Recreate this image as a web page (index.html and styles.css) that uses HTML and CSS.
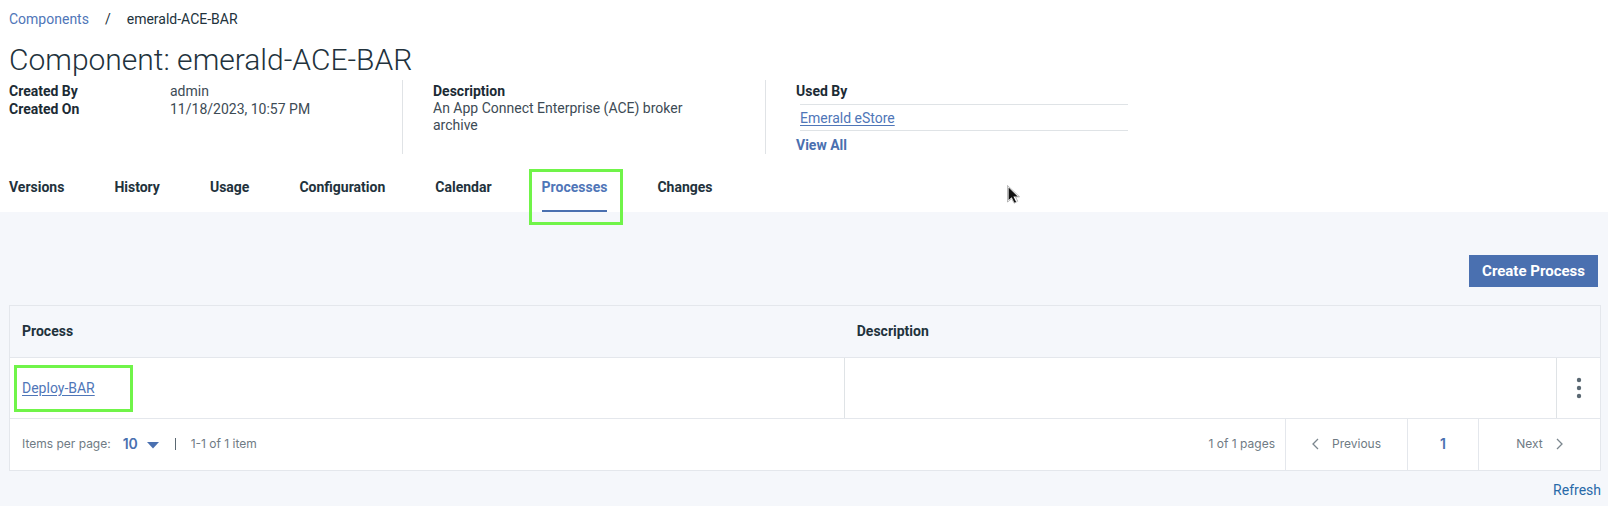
FILE: index.html
```html
<!DOCTYPE html>
<html lang="en">
<head>
<meta charset="utf-8">
<meta name="viewport" content="width=device-width, initial-scale=1">
<title>Component: emerald-ACE-BAR</title>
<link rel="stylesheet" href="styles.css">
</head>
<body>
<header class="header">
  <nav class="breadcrumb" aria-label="Breadcrumb">
    <a class="link" href="#components">Components</a>
    <span class="slash">/</span>
    <span>emerald-ACE-BAR</span>
  </nav>
  <h1 class="title">Component: emerald-ACE-BAR</h1>
  <div class="meta">
    <dl class="created">
      <dt>Created By</dt><dd>admin</dd>
      <dt>Created On</dt><dd>11/18/2023, 10:57 PM</dd>
    </dl>
    <section class="meta-col">
      <h2 class="label">Description</h2>
      <p class="description">An App Connect Enterprise (ACE) broker archive</p>
    </section>
    <section class="meta-col">
      <h2 class="label">Used By</h2>
      <ul class="used-list">
        <li><a class="link underlined" href="#estore">Emerald eStore</a></li>
      </ul>
      <a class="link view-all" href="#all">View All</a>
    </section>
  </div>
  <nav class="tabs" aria-label="Component sections">
    <a class="tab" href="#versions">Versions</a>
    <a class="tab" href="#history">History</a>
    <a class="tab" href="#usage">Usage</a>
    <a class="tab" href="#configuration">Configuration</a>
    <a class="tab" href="#calendar">Calendar</a>
    <a class="tab tab-active" href="#processes" aria-current="page">Processes<span class="mark mark-tab"></span></a>
    <a class="tab" href="#changes">Changes</a>
  </nav>
</header>
<main class="content">
  <div class="toolbar"><button class="create" type="button">Create Process</button></div>
  <div class="panel">
    <table class="processes">
      <colgroup><col class="col-process"><col><col class="col-actions"></colgroup>
      <thead><tr><th scope="col">Process</th><th scope="col" colspan="2">Description</th></tr></thead>
      <tbody>
        <tr>
          <td><span class="mark-anchor"><a class="link underlined" href="#deploy">Deploy-BAR</a><span class="mark mark-link"></span></span></td>
          <td></td>
          <td class="actions">
            <button class="menu" type="button" aria-label="Actions">
              <svg width="6" height="22" viewBox="0 0 6 22" fill="#5a6872"><circle cx="3" cy="3" r="2.2"/><circle cx="3" cy="11" r="2.2"/><circle cx="3" cy="19" r="2.2"/></svg>
            </button>
          </td>
        </tr>
      </tbody>
    </table>
    <div class="pagination">
      <label class="per-page" for="per-page">Items per page:</label>
      <span class="select-wrap">
        <select class="select" id="per-page"><option>10</option></select>
        <svg class="caret" width="12" height="7" viewBox="0 0 12 7"><path d="M0 0H12L6 6.5Z" fill="#4a70b0"/></svg>
      </span>
      <span class="bar"></span>
      <span>1-1 of 1 item</span>
      <span class="pages">1 of 1 pages</span>
      <button class="pager pager-side" type="button">
        <svg width="7" height="12" viewBox="0 0 7 12" fill="none" stroke="#7b868e" stroke-width="1.3"><path d="M6 1L1 6l5 5"/></svg>Previous
      </button>
      <button class="pager pager-current" type="button" aria-current="page">1</button>
      <button class="pager pager-side" type="button">Next
        <svg width="7" height="12" viewBox="0 0 7 12" fill="none" stroke="#7b868e" stroke-width="1.3"><path d="M1 1l5 5-5 5"/></svg>
      </button>
    </div>
  </div>
  <div class="footer"><a class="refresh" href="#refresh">Refresh</a></div>
</main>
<svg class="cursor" width="14" height="20" viewBox="0 0 14 20"><path d="M1 1v15.500l3.500-3.200 2.600 5.200 2.800-1.300-2.500-5h4.800Z" fill="#111" stroke="#fff" stroke-width="1.200"/><path d="M.5.500v16.500l3.800-3M.5.500l12 11.200H8.500l2.200 4.500-3.500 2-2.500-4.500" fill="none" stroke="#777" stroke-width=".5"/></svg>
</body>
</html>
```
FILE: styles.css
```css
* { box-sizing: border-box; }
body {
  margin: 0;
  min-height: 100vh;
  display: flex;
  flex-direction: column;
  background: #f5f7fb;
  color: #22323c;
  font: 14px/18px Roboto, "Liberation Sans", sans-serif;
}
h1, h2, p, dl, dd, ul { margin: 0; padding: 0; }
button, select { font: inherit; color: inherit; border: 0; background: none; padding: 0; }
.link { color: #4f76b8; text-decoration: none; }
.underlined { text-decoration: underline; text-underline-offset: 2px; }
.header { background: #fff; padding: 10px 9px 0; }
.breadcrumb { display: flex; gap: 16px; }
.title { margin-top: 12px; font-size: 30px; line-height: 40px; font-weight: 300; }
.meta { display: grid; grid-template-columns: 393fr 363fr 363fr 471fr; color: #3d4b55; }
.created {
  display: grid;
  grid-template-columns: 161px 1fr;
  align-content: start;
  padding-top: 2px;
}
.created dt, .label { color: #1c2b35; font-size: 14px; line-height: 18px; font-weight: 700; }
.meta-col { border-left: 1px solid #e0e3e6; padding: 2px 0 0 30px; }
.description { width: 264px; max-width: 100%; line-height: 17px; }
.used-list { list-style: none; margin: 4px 0 0 4px; border: solid #dfe3e6; border-width: 1px 0; }
.used-list li { padding: 4px 0 3px; }
.view-all { display: block; margin-top: 5px; font-weight: 700; color: #4a70b0; }
.tabs { display: flex; gap: 50px; margin-top: 24px; }
.tab {
  position: relative;
  padding-bottom: 14px;
  color: #22323c;
  font-weight: 700;
  text-decoration: none;
  border-bottom: 2px solid transparent;
}
.tab-active { color: #4f76b8; border-color: #4a70b0; }
.mark { position: absolute; border: 3px solid #70f449; pointer-events: none; }
.mark-tab { inset: -9px -16px -15px -13px; }
.mark-anchor { position: relative; display: inline-block; }
.mark-link { inset: -14px -38px -15px -8px; }
.content { padding: 43px 7px 5px 9px; }
.toolbar { display: flex; justify-content: flex-end; padding-right: 3px; }
.create {
  height: 32px;
  padding: 0 13px;
  background: #4a70b0;
  color: #fff;
  font-size: 15px;
  font-weight: 700;
}
.panel { margin-top: 18px; border: 1px solid #e4e7ec; background: #fff; }
.processes { width: 100%; border-collapse: collapse; table-layout: fixed; }
.col-process { width: 52.5%; }
.col-actions { width: 43px; }
.processes th {
  height: 51px;
  padding: 0 12px;
  background: #f5f7fb;
  border-bottom: 1px solid #e4e7ec;
  text-align: left;
  font-weight: 700;
}
.processes td { height: 61px; padding: 0 12px; border-bottom: 1px solid #e4e7ec; }
.processes td + td { border-left: 1px solid #dfe3e6; }
.processes .actions { padding: 0; text-align: center; }
.menu { display: inline-flex; padding: 4px; vertical-align: middle; }
.pagination {
  display: flex;
  align-items: center;
  height: 51px;
  padding-left: 12px;
  color: #6f7b84;
  font: 12px/16px Inter, sans-serif;
}
.select-wrap { position: relative; margin: 0 16px 0 12px; }
.select { appearance: none; width: 36px; color: #4a70b0; font-size: 14px; font-weight: 600; }
.caret { position: absolute; right: 0; top: 6px; pointer-events: none; }
.bar { width: 1px; height: 12px; margin-right: 15px; background: #5a6872; }
.pages { margin-left: auto; padding-right: 10px; }
.pager {
  display: flex;
  align-items: center;
  justify-content: center;
  gap: 13px;
  height: 100%;
  border-left: 1px solid #e4e7ec;
}
.pager-side { width: 122px; }
.pager-current { width: 71px; color: #4a70b0; font-size: 14px; font-weight: 600; }
.footer { display: flex; justify-content: flex-end; padding-top: 10px; }
.refresh { color: #2869a8; text-decoration: none; }
.cursor { position: absolute; left: 1007px; top: 185px; }
```
